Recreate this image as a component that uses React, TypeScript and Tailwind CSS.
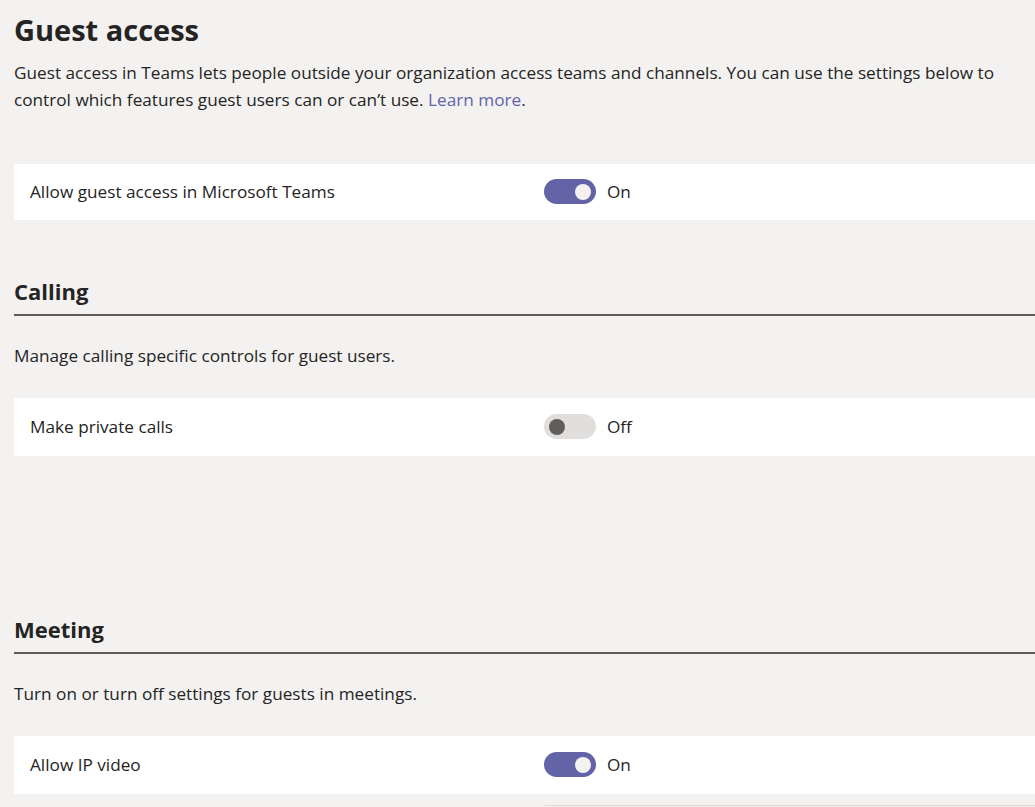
import React from 'react';

function Toggle({ on }: { on: boolean }) {
  return (
    <div className="flex items-center gap-[11px]">
      <div
        className={
          on
            ? 'flex h-[25px] w-[52px] items-center justify-end rounded-full bg-[#6264a7] px-[5px]'
            : 'flex h-[25px] w-[52px] items-center justify-start rounded-full bg-[#e1dfdd] px-[5px]'
        }
      >
        <div className={on ? 'h-[16px] w-[16px] rounded-full bg-[#f3f2f1]' : 'h-[16px] w-[16px] rounded-full bg-[#605e5c]'} />
      </div>
      <span className="text-[17.2px]">{on ? 'On' : 'Off'}</span>
    </div>
  );
}

function Row({ label, on }: { label: string; on: boolean }) {
  return (
    <div className="flex h-[58px] items-center bg-white pl-4">
      <div className="w-[514px] text-[17.2px]">{label}</div>
      <Toggle on={on} />
    </div>
  );
}

function Section({ title, desc, children }: { title: string; desc: string; children: React.ReactNode }) {
  return (
    <div>
      <h2 className="text-[22px] font-bold leading-[30px]">{title}</h2>
      <div className="mt-[8px] h-[2px] bg-[#605e5c]" />
      <p className="mt-[27px] text-[17.2px] leading-[26px]">{desc}</p>
      <div className="mt-[29px]">{children}</div>
    </div>
  );
}

export default function App() {
  return (
    <div className="min-h-screen overflow-hidden bg-[#f3f2f1] pl-[14px] font-['Segoe_UI','Open_Sans',sans-serif] text-[#252423]">
      <h1 className="pt-[12px] text-[29px] font-bold leading-[36px]">Guest access</h1>
      <p className="mt-[11px] text-[17.2px] leading-[27px]">
        Guest access in Teams lets people outside your organization access teams and channels. You can use the settings below to
        control which features guest users can or can’t use. <span className="text-[#6264a7]">Learn more</span>.
      </p>
      <div className="mt-[51px]">
        <div className="flex h-[56px] items-center bg-white pl-4">
          <div className="w-[514px] text-[17.2px]">Allow guest access in Microsoft Teams</div>
          <Toggle on={true} />
        </div>
      </div>
      <div className="mt-[56px]">
        <Section title="Calling" desc="Manage calling specific controls for guest users.">
          <Row label="Make private calls" on={false} />
        </Section>
      </div>
      <div className="mt-[158px]">
        <Section title="Meeting" desc="Turn on or turn off settings for guests in meetings.">
          <Row label="Allow IP video" on={true} />
          <div className="mt-[11px] ml-[531px] h-[40px] border-t border-[#dcdad8]" />
        </Section>
      </div>
    </div>
  );
}
